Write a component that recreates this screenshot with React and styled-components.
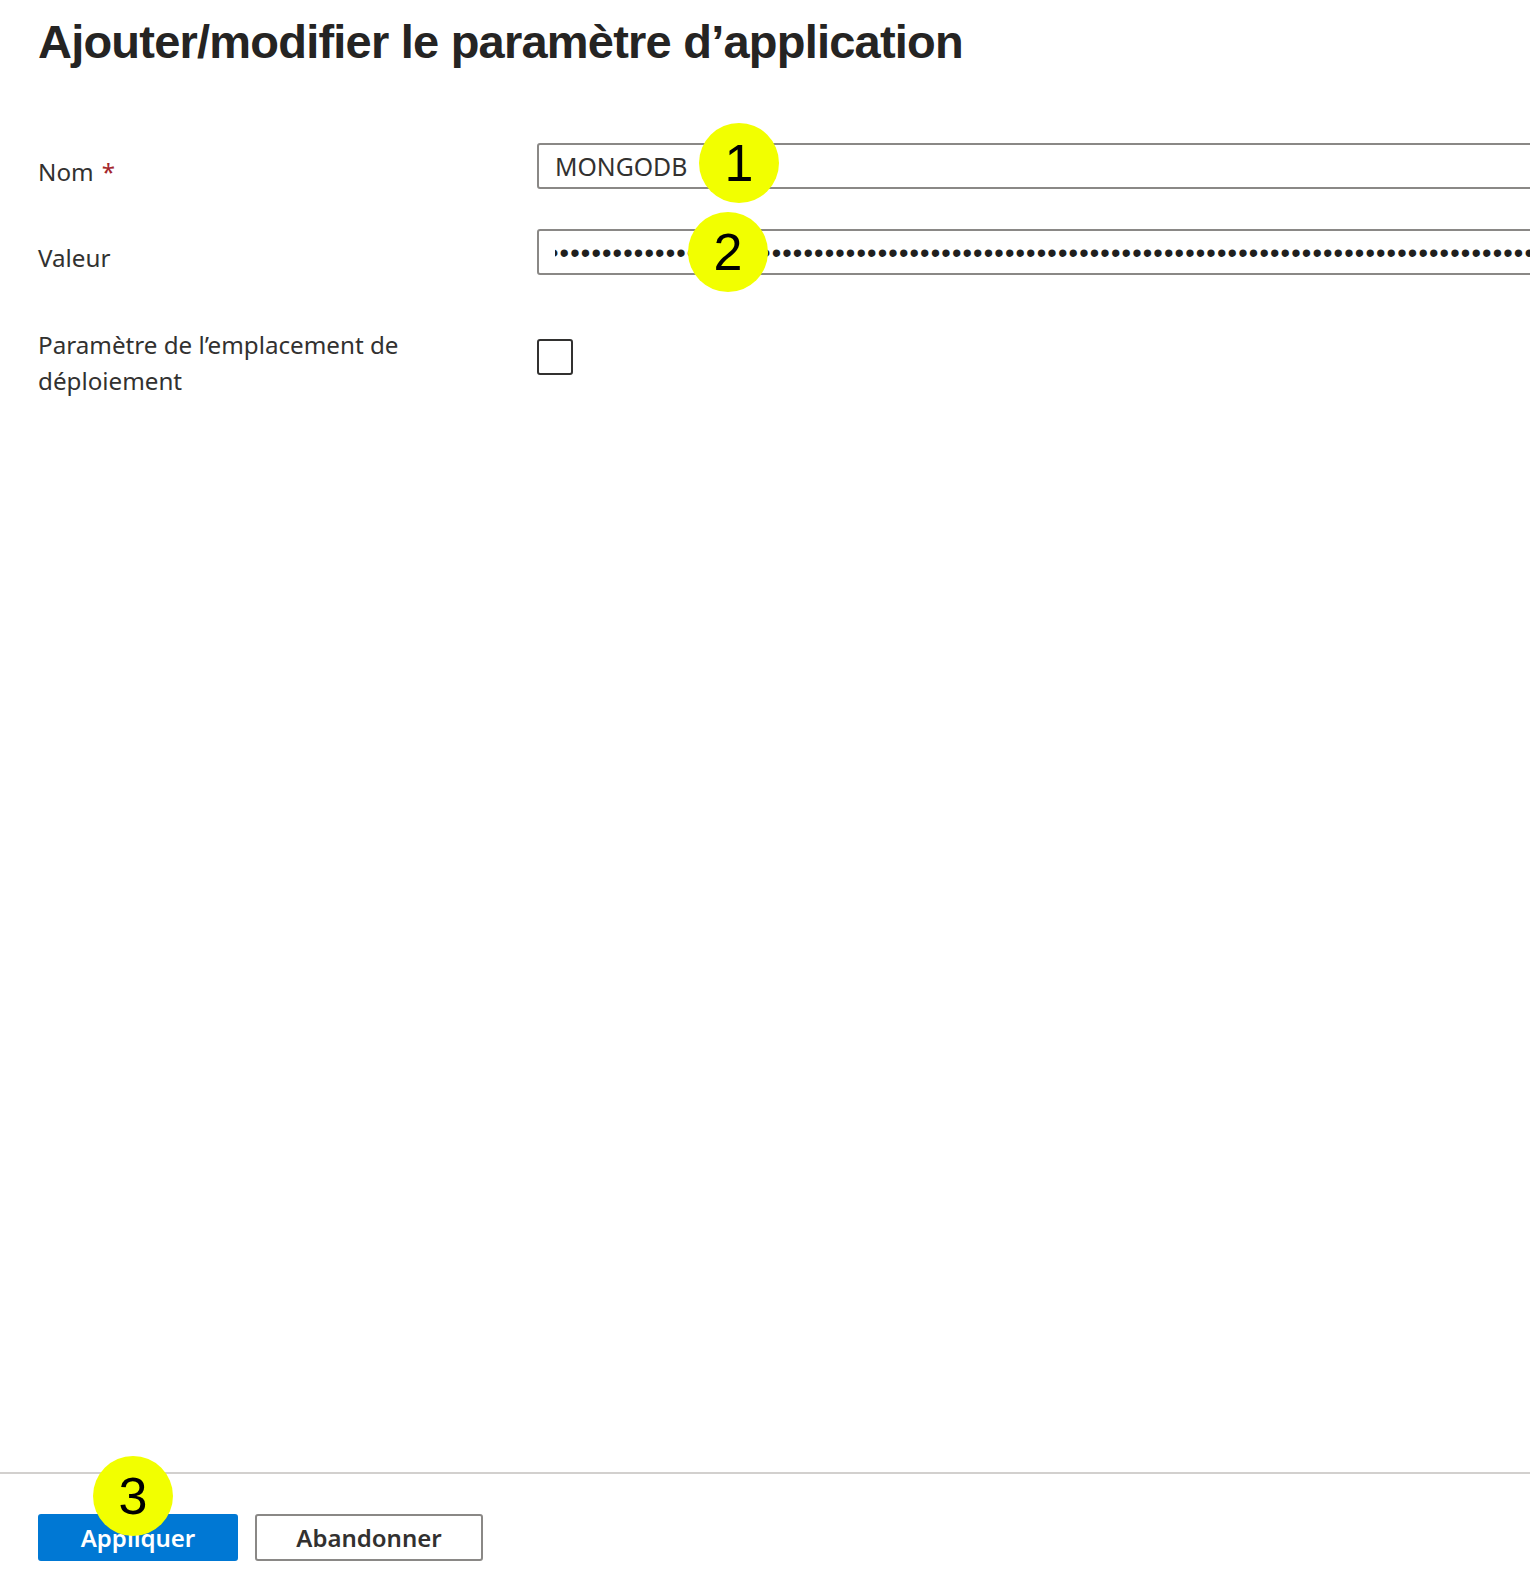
import React from 'react'
import styled, { createGlobalStyle } from 'styled-components'

const GlobalStyle = createGlobalStyle`
    html, body {
        margin: 0;
        padding: 0;
        background: #ffffff;
    }
    body {
        font-family: "Noto Sans", "Open Sans", sans-serif;
        color: #323130;
        overflow: hidden;
    }
`

const Page = styled.div`
    box-sizing: border-box;
    display: flex;
    flex-direction: column;
    height: 1572px;
    overflow: hidden;
    width: 1530px;
`

const Content = styled.div`
    flex: 1;
    padding: 0 0 0 38px;
`

const Title = styled.h1`
    color: #252423;
    font-family: "Liberation Sans", Arial, sans-serif;
    font-size: 47px;
    font-weight: 700;
    letter-spacing: -0.78px;
    line-height: 56px;
    margin: 14px 0 0;
`

const Form = styled.div`
    display: flex;
    flex-direction: column;
    margin-top: 73px;
`

const Row = styled.div`
    display: flex;
    align-items: flex-start;
    margin-top: ${props => props.gap || 0}px;
`

const Label = styled.div`
    box-sizing: border-box;
    flex: 0 0 499px;
    font-size: 24.2px;
    line-height: 36px;
    padding-top: ${props => props.offset || 0}px;
    padding-right: 90px;
`

const Required = styled.span`
    color: #a4262c;
    margin-left: 8px;
`

const Field = styled.div`
    position: relative;
    flex: 0 0 1100px;
`

const Input = styled.div`
    align-items: center;
    border: 2px solid #8a8886;
    border-radius: 3px;
    box-sizing: border-box;
    display: flex;
    font-size: 24.8px;
    height: 46px;
    overflow: hidden;
    padding: 0 16px;
    white-space: nowrap;
`

const Dots = styled.span`
    color: #201f1e;
    display: block;
    flex: 1;
    font-family: "Liberation Sans", Arial, sans-serif;
    font-size: 27px;
    letter-spacing: 1.15px;
    overflow: hidden;
    padding-top: 3px;
    text-indent: -6px;
`

const Checkbox = styled.div`
    border: 2px solid #323130;
    border-radius: 3px;
    box-sizing: border-box;
    height: 36px;
    margin-top: 12px;
    width: 36px;
`

const Callout = styled.div`
    align-items: center;
    background: #f2ff00;
    border-radius: 50%;
    color: #000000;
    display: flex;
    font-family: "Liberation Sans", Arial, sans-serif;
    font-size: 52px;
    height: 80px;
    justify-content: center;
    left: ${props => props.x}px;
    position: absolute;
    top: ${props => props.y}px;
    width: 80px;
    z-index: 2;
`

const Footer = styled.div`
    border-top: 2px solid #d2d0ce;
    box-sizing: border-box;
    display: flex;
    gap: 17px;
    height: 100px;
    padding: 40px 0 0 38px;
`

const ButtonWrap = styled.div`
    position: relative;
`

const Button = styled.button`
    background: ${props => props.primary ? '#0078d4' : '#ffffff'};
    border: 2px solid ${props => props.primary ? '#0078d4' : '#8a8886'};
    border-radius: 3px;
    box-sizing: border-box;
    color: ${props => props.primary ? '#ffffff' : '#323130'};
    font-family: "Noto Sans", "Open Sans", sans-serif;
    font-size: 24px;
    font-weight: 600;
    height: 47px;
    padding: 0;
    width: ${props => props.width}px;
`

const App = () => {
    const dots = '•'.repeat(110)
    return <Page>
        <GlobalStyle />
        <Content>
            <Title>Ajouter/modifier le paramètre d’application</Title>
            <Form>
                <Row>
                    <Label offset={11}>Nom<Required>*</Required></Label>
                    <Field>
                        <Input>MONGODB</Input>
                        <Callout x={162} y={-20}>1</Callout>
                    </Field>
                </Row>
                <Row gap={39}>
                    <Label offset={11}>Valeur</Label>
                    <Field>
                        <Input><Dots>{dots}</Dots></Input>
                        <Callout x={151} y={-17}>2</Callout>
                    </Field>
                </Row>
                <Row gap={51}>
                    <Label>Paramètre de l’emplacement de déploiement</Label>
                    <Field>
                        <Checkbox />
                    </Field>
                </Row>
            </Form>
        </Content>
        <Footer>
            <ButtonWrap>
                <Button primary width={200}>Appliquer</Button>
                <Callout x={55} y={-58}>3</Callout>
            </ButtonWrap>
            <Button width={228}>Abandonner</Button>
        </Footer>
    </Page>
}

export default App
